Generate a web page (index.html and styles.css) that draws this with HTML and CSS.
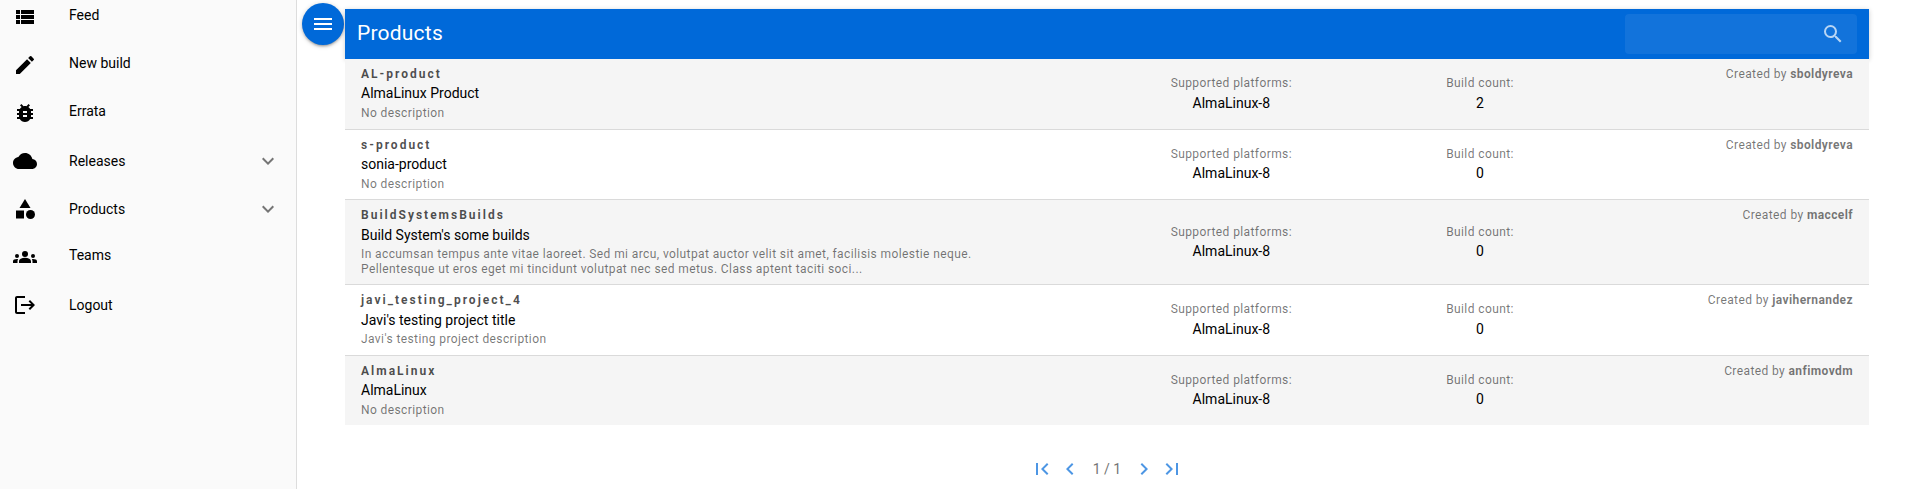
FILE: index.html
```html
<!DOCTYPE html>
<html lang="en">
<head>
<meta charset="utf-8">
<title>Products</title>
<link rel="stylesheet" href="styles.css">
</head>
<body>
<div class="layout">
  <nav class="drawer">
    <a class="nav-item"><svg class="icon" viewBox="0 0 24 24"><path d="M3 14h4v-4H3v4zm0 5h4v-4H3v4zM3 9h4V5H3v4zm5 5h13v-4H8v4zm0 5h13v-4H8v4zM8 5v4h13V5H8z"/></svg><span class="nav-label">Feed</span></a>
    <a class="nav-item"><svg class="icon" viewBox="0 0 24 24"><path d="M3 17.25V21h3.75L17.81 9.94l-3.75-3.75L3 17.25zM20.71 7.04a1 1 0 0 0 0-1.41l-2.34-2.34a1 1 0 0 0-1.41 0l-1.83 1.83 3.75 3.75 1.83-1.83z"/></svg><span class="nav-label">New build</span></a>
    <a class="nav-item"><svg class="icon" viewBox="0 0 24 24"><path d="M20 8h-2.81c-.45-.78-1.07-1.45-1.82-1.96L17 4.41 15.59 3l-2.17 2.17C12.96 5.06 12.49 5 12 5s-.96.06-1.41.17L8.41 3 7 4.41l1.62 1.63C7.88 6.55 7.26 7.22 6.81 8H4v2h2.09c-.05.33-.09.66-.09 1v1H4v2h2v1c0 .34.04.67.09 1H4v2h2.81c1.04 1.79 2.97 3 5.19 3s4.15-1.21 5.19-3H20v-2h-2.09c.05-.33.09-.66.09-1v-1h2v-2h-2v-1c0-.34-.04-.67-.09-1H20V8zm-6 8h-4v-2h4v2zm0-4h-4v-2h4v2z"/></svg><span class="nav-label">Errata</span></a>
    <a class="nav-item nav-item--group"><svg class="icon" viewBox="0 0 24 24"><path d="M19.35 10.04C18.67 6.59 15.64 4 12 4 9.11 4 6.6 5.64 5.35 8.04 2.34 8.36 0 10.91 0 14c0 3.31 2.69 6 6 6h13c2.76 0 5-2.24 5-5 0-2.64-2.05-4.78-4.65-4.96z"/></svg><span class="nav-label">Releases</span><svg class="icon chevron" viewBox="0 0 24 24"><path d="M7.41 8.59 12 13.17l4.59-4.58L18 10l-6 6-6-6 1.41-1.41z"/></svg></a>
    <a class="nav-item nav-item--group"><svg class="icon" viewBox="0 0 24 24"><path d="m12 2-5.5 9h11z"/><circle cx="17.5" cy="17.5" r="4.5"/><path d="M3 13.5h8v8H3z"/></svg><span class="nav-label">Products</span><svg class="icon chevron" viewBox="0 0 24 24"><path d="M7.41 8.59 12 13.17l4.59-4.58L18 10l-6 6-6-6 1.41-1.41z"/></svg></a>
    <a class="nav-item"><svg class="icon" viewBox="0 0 24 24"><circle cx="12" cy="9" r="3"/><circle cx="4" cy="11" r="2"/><circle cx="20" cy="11" r="2"/><path d="M12 12.750c1.630 0 3.070.39 4.240.9 1.080.48 1.760 1.560 1.760 2.730V18H6v-1.610c0-1.180.68-2.260 1.760-2.730 1.170-.52 2.610-.91 4.240-.91z"/><path d="M5.130 14.100C4.760 14.040 4.390 14 4 14c-.99 0-1.930.21-2.780.58C.48 14.900 0 15.620 0 16.430V18h4.500v-1.610c0-.83.23-1.610.63-2.290z"/><path d="M24 16.430c0-.81-.48-1.530-1.220-1.850C21.930 14.210 20.990 14 20 14c-.39 0-.76.04-1.130.1.4.68.63 1.460.63 2.290V18H24v-1.570z"/></svg><span class="nav-label">Teams</span></a>
    <a class="nav-item nav-item--group"><svg class="icon" viewBox="0 0 24 24"><path d="m17 7-1.410 1.410L18.170 11H8v2h10.170l-2.580 2.580L17 17l5-5z"/><path d="M4 5h8V3H4c-1.100 0-2 .9-2 2v14c0 1.100.9 2 2 2h8v-2H4V5z"/></svg><span class="nav-label">Logout</span></a>
  </nav>

  <button class="menu-button" aria-label="Menu"><svg class="icon" viewBox="0 0 24 24"><path d="M3 18h18v-2H3v2zm0-5h18v-2H3v2zm0-7v2h18V6H3z"/></svg></button>

  <main class="page">
    <header class="toolbar">
      <h1 class="toolbar-title">Products</h1>
      <div class="search"><svg class="icon" viewBox="0 0 24 24"><path d="M15.500 14h-.79l-.28-.27A6.471 6.471 0 0 0 16 9.500 6.500 6.500 0 1 0 9.500 16c1.610 0 3.090-.59 4.230-1.570l.27.28v.79l5 4.990L20.490 19l-4.990-5zm-6 0C7.010 14 5 11.990 5 9.500S7.010 5 9.500 5 14 7.010 14 9.500 11.990 14 9.500 14z"/></svg></div>
    </header>

    <section class="list">
      <article class="item">
        <div class="stack"><div class="overline">AL-product</div><div class="label">AlmaLinux Product</div><div class="caption">No description</div></div>
        <div class="stack centered"><div class="caption">Supported platforms:</div><div class="label">AlmaLinux-8</div></div>
        <div class="stack centered"><div class="caption">Build count:</div><div class="label">2</div></div>
        <div class="caption author">Created by <b>sboldyreva</b></div>
      </article>
      <article class="item">
        <div class="stack"><div class="overline">s-product</div><div class="label">sonia-product</div><div class="caption">No description</div></div>
        <div class="stack centered"><div class="caption">Supported platforms:</div><div class="label">AlmaLinux-8</div></div>
        <div class="stack centered"><div class="caption">Build count:</div><div class="label">0</div></div>
        <div class="caption author">Created by <b>sboldyreva</b></div>
      </article>
      <article class="item">
        <div class="stack"><div class="overline">BuildSystemsBuilds</div><div class="label">Build System's some builds</div><div class="caption">In accumsan tempus ante vitae laoreet. Sed mi arcu, volutpat auctor velit sit amet, facilisis molestie neque.<br>Pellentesque ut eros eget mi tincidunt volutpat nec sed metus. Class aptent taciti soci...</div></div>
        <div class="stack centered"><div class="caption">Supported platforms:</div><div class="label">AlmaLinux-8</div></div>
        <div class="stack centered"><div class="caption">Build count:</div><div class="label">0</div></div>
        <div class="caption author">Created by <b>maccelf</b></div>
      </article>
      <article class="item">
        <div class="stack"><div class="overline">javi_testing_project_4</div><div class="label">Javi's testing project title</div><div class="caption">Javi's testing project description</div></div>
        <div class="stack centered"><div class="caption">Supported platforms:</div><div class="label">AlmaLinux-8</div></div>
        <div class="stack centered"><div class="caption">Build count:</div><div class="label">0</div></div>
        <div class="caption author">Created by <b>javihernandez</b></div>
      </article>
      <article class="item">
        <div class="stack"><div class="overline">AlmaLinux</div><div class="label">AlmaLinux</div><div class="caption">No description</div></div>
        <div class="stack centered"><div class="caption">Supported platforms:</div><div class="label">AlmaLinux-8</div></div>
        <div class="stack centered"><div class="caption">Build count:</div><div class="label">0</div></div>
        <div class="caption author">Created by <b>anfimovdm</b></div>
      </article>
    </section>

    <footer class="pagination">
      <svg class="icon" viewBox="0 0 24 24"><path d="M18.410 16.590 13.820 12l4.590-4.590L17 6l-6 6 6 6zM6 6h2v12H6z"/></svg>
      <svg class="icon" viewBox="0 0 24 24"><path d="M15.410 7.410 14 6l-6 6 6 6 1.410-1.410L10.830 12z"/></svg>
      <span class="page-count">1 / 1</span>
      <svg class="icon" viewBox="0 0 24 24"><path d="M10 6 8.590 7.410 13.170 12l-4.580 4.590L10 18l6-6z"/></svg>
      <svg class="icon" viewBox="0 0 24 24"><path d="M5.590 7.410 10.180 12l-4.590 4.590L7 18l6-6-6-6zM16 6h2v12h-2z"/></svg>
    </footer>
  </main>
</div>
</body>
</html>
```
FILE: styles.css
```css
* {
  box-sizing: border-box;
}

body {
  margin: 0;
  overflow: hidden;
  background: #fff;
  color: #000;
  font: 14px/1.2 Roboto, sans-serif;
}

.layout {
  display: flex;
  align-items: flex-start;
  height: 489px;
}

.icon {
  display: block;
  flex: none;
  width: 24px;
  height: 24px;
  fill: currentColor;
}

.drawer {
  flex: none;
  width: 297px;
  height: 496px;
  margin-top: -7px;
  border-right: 1px solid #ddd;
  background: #fafafa;
}

.nav-item {
  display: flex;
  align-items: center;
  height: 48px;
  padding: 0 16px 0 13px;
}

.nav-label {
  flex: 1;
  margin-left: 32px;
  padding-bottom: 4px;
}

.nav-item--group .nav-label {
  padding-bottom: 0;
}

.chevron {
  color: #757575;
}

.menu-button {
  display: flex;
  flex: none;
  align-items: center;
  justify-content: center;
  width: 42px;
  height: 42px;
  margin: 3px 1px 0 5px;
  padding: 0;
  border: 0;
  border-radius: 50%;
  background: #0069d9;
  color: #fff;
  box-shadow: 0 1px 5px rgba(0, 0, 0, .2), 0 2px 2px rgba(0, 0, 0, .14), 0 3px 1px -2px rgba(0, 0, 0, .12);
}

.page {
  width: 1524px;
  padding-top: 9px;
}

.toolbar {
  display: flex;
  align-items: center;
  justify-content: space-between;
  height: 50px;
  padding: 0 12px;
  background: #0069d9;
  color: #fff;
  box-shadow: 0 1px 5px rgba(0, 0, 0, .2);
}

.toolbar-title {
  margin: 0;
  font-size: 21px;
  font-weight: 400;
  letter-spacing: .01em;
}

.search {
  display: flex;
  align-items: center;
  justify-content: flex-end;
  width: 232px;
  height: 40px;
  padding: 0 12px;
  border-radius: 4px;
  background: rgba(255, 255, 255, .07);
  color: rgba(255, 255, 255, .7);
}

.list {
  position: relative;
}

.item {
  display: grid;
  grid-template-columns: 6fr 2fr 2fr 2fr;
  align-items: center;
  padding: 8px 16px;
  background: #fff;
}

.item:nth-child(odd) {
  background: #f5f5f5;
}

.item + .item {
  border-top: 1px solid #dadada;
}

.stack {
  display: flex;
  flex-direction: column;
  gap: 4px;
}

.centered {
  text-align: center;
}

.overline {
  color: rgba(0, 0, 0, .7);
  font-size: 12px;
  font-weight: 700;
  letter-spacing: .16667em;
}

.caption {
  color: rgba(0, 0, 0, .54);
  font-size: 12px;
  letter-spacing: .03333em;
}

.author {
  align-self: start;
  text-align: right;
}

.pagination {
  display: flex;
  align-items: center;
  justify-content: center;
  gap: 4px;
  margin-top: 32px;
  color: #4d96e4;
}

.page-count {
  margin: 0 7px;
  color: #757575;
}
```
